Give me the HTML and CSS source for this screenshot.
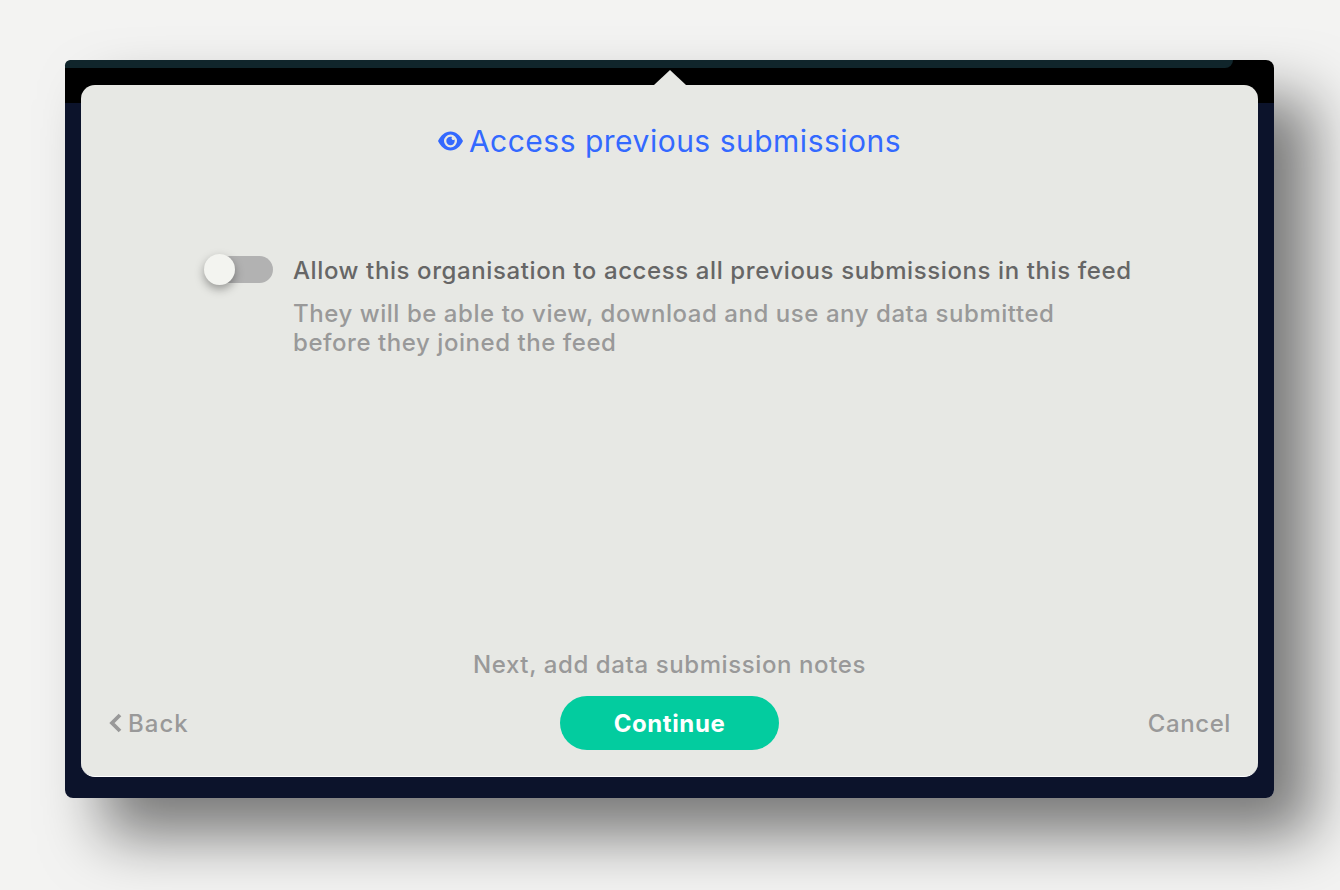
FILE: index.html
```html
<!DOCTYPE html>
<html lang="en">
<head>
  <meta charset="UTF-8" />
  <title>Access previous submissions</title>
  <link rel="stylesheet" href="styles.css">
</head>
<body>
  <div class="window">
    <div class="top-strip"></div>
    <div class="panel">
      <h1 class="title">
        <svg class="eye" viewBox="0 0 25 20" width="25" height="20">
          <path fill-rule="evenodd" fill="#3369ff" d="M12.500 0.500C7 .5 2.800 4.500 0 10c2.800 5.500 7 9.500 12.500 9.500S22.200 15.500 25 10C22.200 4.500 18 .5 12.500 .5zm0 3a6.500 6.500 0 1 1 0 13 6.500 6.500 0 0 1 0-13z"/>
          <path fill="#3369ff" d="M12.500 5.800a4.200 4.200 0 1 0 4.200 4.200c0-.6-.1-1.100-.3-1.500a1.700 1.700 0 0 1-2.400-2.400c-.4-.2-.9-.3-1.500-.3z"/>
        </svg>
        <span>Access previous submissions</span>
      </h1>

      <div class="option">
        <div class="toggle"><div class="knob"></div></div>
        <div class="option-text">
          <div class="option-label">Allow this organisation to access all previous submissions in this feed</div>
          <div class="option-desc">They will be able to view, download and use any data submitted before they joined the feed</div>
        </div>
      </div>

      <div class="next-hint">Next, add data submission notes</div>
      <div class="actions">
        <a class="link back">
          <svg viewBox="0 0 14 20" width="14" height="20">
            <path d="M12 2 4 10l8 8" fill="none" stroke="#999" stroke-width="3.800"/>
          </svg>
          Back
        </a>
        <button class="continue-btn">Continue</button>
        <a class="link cancel">Cancel</a>
      </div>
    </div>
  </div>
</body>
</html>
```

FILE: styles.css
```css
body {
  margin: 0;
  padding: 60px 66px 0 65px;
  height: 890px;
  box-sizing: border-box;
  overflow: hidden;
  background: #f3f3f2;
  font-family: Inter, "Noto Sans", sans-serif;
}
.window {
  height: 738px;
  border-radius: 8px;
  background: linear-gradient(#000 43px, #0c132b 43px);
  box-shadow: 38px 38px 60px rgba(0, 0, 0, 0.5);
  display: flex;
  flex-direction: column;
}
.top-strip {
  height: 8px;
  margin-right: 41px;
  background: #10252b;
  border-radius: 8px 0 12px 0;
}
.panel {
  position: relative;
  flex: 1;
  margin: 17px 16px 21px;
  background: #e7e8e4;
  border-radius: 14px;
  border-bottom: 1px solid #fff;
  display: flex;
  flex-direction: column;
}
.panel::before {
  content: "";
  position: absolute;
  top: -15px;
  left: 573px;
  width: 32px;
  height: 15px;
  background: #e7e8e4;
  clip-path: polygon(50% 0, 100% 100%, 0 100%);
}
.title {
  margin: 37px 0 0;
  height: 38px;
  display: flex;
  justify-content: center;
  align-items: center;
  gap: 6px;
  font-size: 30px;
  font-weight: 400;
  letter-spacing: 0.5px;
  color: #3369ff;
}
.option {
  display: flex;
  margin: 93px 0 0 122px;
  gap: 20px;
}
.toggle {
  position: relative;
  width: 60px;
  height: 27px;
  margin: 3px 0 0 10px;
  background: #b2b2b2;
  border-radius: 14px;
}
.knob {
  position: absolute;
  top: -2px;
  left: -9px;
  width: 31px;
  height: 31px;
  border-radius: 50%;
  background: #f3f4f0;
  box-shadow: 0 4px 10px rgba(0, 0, 0, 0.35);
}
.option-text {
  width: 850px;
  padding-top: 2px;
  font-size: 24px;
  font-weight: 500;
  letter-spacing: 0.6px;
}
.option-label {
  line-height: 32px;
  color: #666;
}
.option-desc {
  width: 790px;
  margin-top: 12px;
  line-height: 29px;
  letter-spacing: 0.55px;
  color: #999;
}
.next-hint {
  margin-top: auto;
  text-align: center;
  font-size: 24px;
  font-weight: 500;
  letter-spacing: 0.6px;
  line-height: 29px;
  color: #999;
}
.actions {
  display: flex;
  align-items: center;
  margin: 17px 27px 26px;
}
.link {
  flex: 1;
  display: flex;
  align-items: center;
  gap: 6px;
  font-size: 24px;
  font-weight: 500;
  letter-spacing: 0.6px;
  color: #999;
}
.back {
  letter-spacing: 1px;
}
.cancel {
  justify-content: flex-end;
}
.continue-btn {
  width: 219px;
  height: 54px;
  border: none;
  border-radius: 27px;
  background: #03cc9f;
  color: #fff;
  font-family: inherit;
  font-size: 24px;
  font-weight: 700;
  letter-spacing: 0.6px;
}
```
